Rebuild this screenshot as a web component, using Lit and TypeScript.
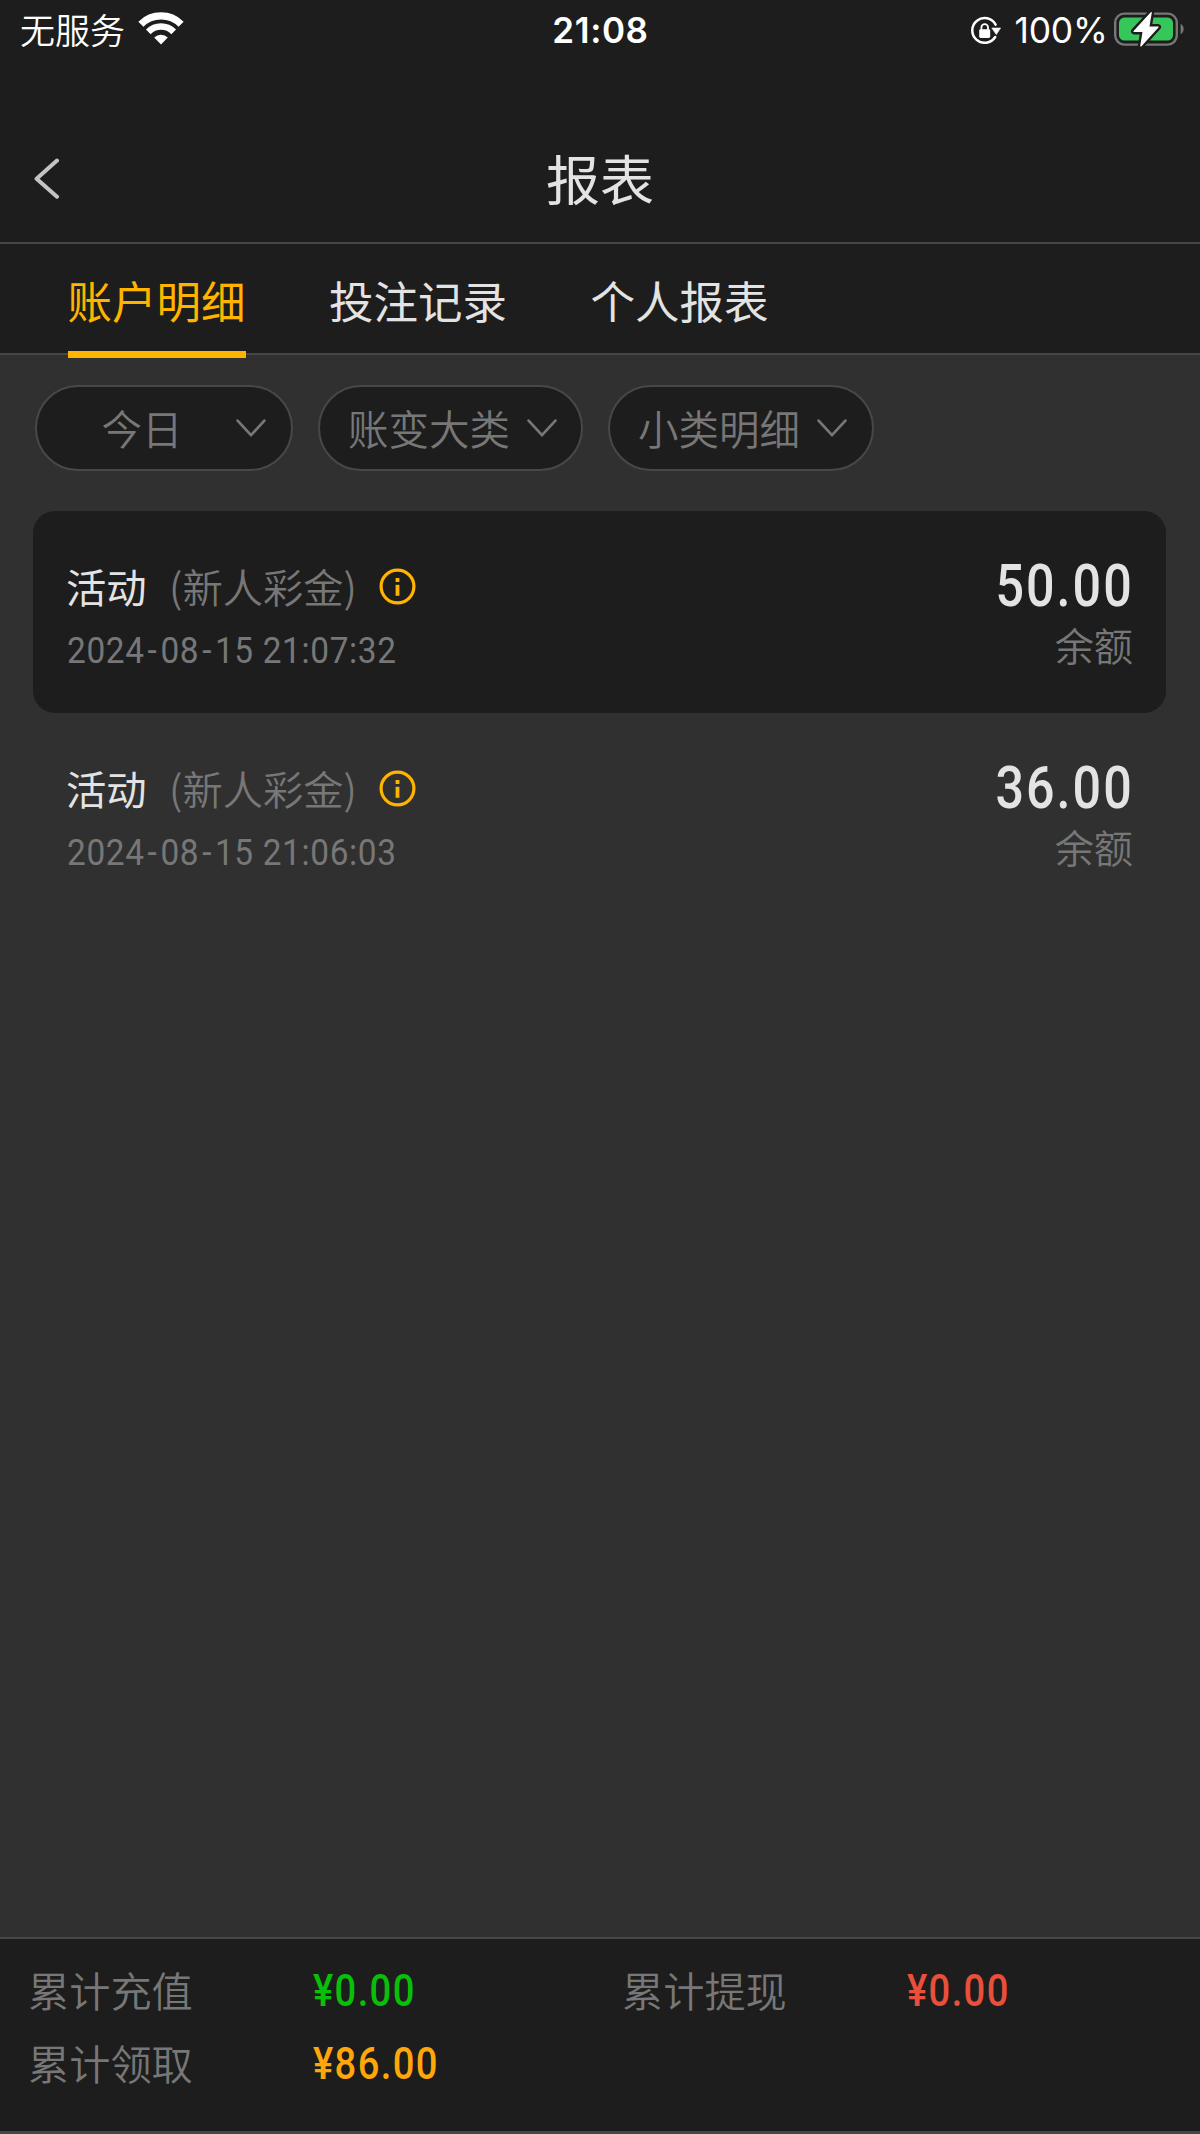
import { LitElement, html, css, svg } from "lit";
import { customElement, property } from "lit/decorators.js";

interface Entry {
  kind: string;
  detail: string;
  time: string;
  amount: string;
  label: string;
}

const entries: Entry[] = [
  { kind: "活动", detail: "(新人彩金)", time: "2024-08-15 21:07:32", amount: "50.00", label: "余额" },
  { kind: "活动", detail: "(新人彩金)", time: "2024-08-15 21:06:03", amount: "36.00", label: "余额" },
];

const tabs = ["账户明细", "投注记录", "个人报表"];
const filters = ["今日", "账变大类", "小类明细"];

const totals = [
  { label: "累计充值", value: "¥0.00", tone: "green" },
  { label: "累计提现", value: "¥0.00", tone: "red" },
  { label: "累计领取", value: "¥86.00", tone: "amber" },
];

const boltPath = "M37.2 0.6 L20 19.4 H29.2 L26.8 34 L44 15 H34.8 Z";

@customElement("status-bar")
class StatusBar extends LitElement {
  static styles = css`
    :host {
      display: grid;
      grid-template-columns: 1fr auto 1fr;
      height: 60px;
      padding: 0 15px 0 20px;
      color: #fff;
      font: 400 35px/60px Inter, "Noto Sans CJK SC", sans-serif;
    }
    .left, .right { display: flex; align-items: flex-start; }
    .carrier { font: 350 35px/58px "Noto Sans CJK SC", sans-serif; }
    .wifi { margin: 12px 0 0 12.5px; }
    .time { font-weight: 600; font-size: 35px; letter-spacing: 0.6px; margin-right: 4px; }
    .right { justify-content: flex-end; }
    .lock { margin: 15px 14px 0 0; }
    .percent { font-size: 35.5px; letter-spacing: -0.3px; line-height: 61px; }
    .battery { margin: 12px 0 0 6.5px; }
    svg { display: block; flex: none; }
  `;
  render() {
    return html`
      <div class="left">
        <span class="carrier">无服务</span>
        <svg class="wifi" width="46" height="34" viewBox="0 0 46 34">
          <g fill="none" stroke="#fff">
            <path d="M2.9 12.2 A28.6 28.6 0 0 1 43.1 12.2" stroke-width="7.2" />
            <path d="M10.3 19.8 A18 18 0 0 1 35.7 19.8" stroke-width="6.6" />
          </g>
          <path d="M16.2 25.4 A9.8 9.8 0 0 1 29.8 25.4 L23 32.4 Z" fill="#fff" />
        </svg>
      </div>
      <span class="time">21:08</span>
      <div class="right">
        <svg class="lock" width="31" height="31" viewBox="0 0 31 31">
          <path d="M25.2 22 A12.4 12.4 0 1 1 25.6 9.6" fill="none" stroke="#fff" stroke-width="2.5" stroke-linecap="round" />
          <path d="M21.8 13 H30.6 L26.3 19.6 Z" fill="#fff" stroke="#fff" stroke-width="0.6" stroke-linejoin="round" />
          <rect x="9.2" y="14.2" width="11" height="8.8" rx="1.4" fill="#fff" />
          <path d="M11.4 14.8 V12.4 a3.3 3.3 0 0 1 6.6 0 V14.8" fill="none" stroke="#fff" stroke-width="1.8" />
        </svg>
        <span class="percent">100%</span>
        <svg class="battery" width="71" height="35" viewBox="0 0 71 35">
          <rect x="1.2" y="1.6" width="61.6" height="31" rx="9" fill="none" stroke="#77777a" stroke-width="2.4" />
          <path d="M66.6 11.8 A6 6 0 0 1 66.6 22.2 Z" fill="#77777a" />
          <rect x="5" y="5.6" width="54" height="23" rx="5.4" fill="#35c759" />
          ${svg`<path d=${boltPath} fill="#1d1d1d" stroke="#1d1d1d" stroke-width="6" stroke-linejoin="round" />
          <path d=${boltPath} fill="#fff" stroke="#fff" stroke-width="1.2" stroke-linejoin="round" />`}
        </svg>
      </div>
    `;
  }
}

@customElement("filter-pill")
class FilterPill extends LitElement {
  @property() label = "";
  static styles = css`
    :host {
      box-sizing: border-box;
      display: flex;
      align-items: center;
      justify-content: space-between;
      height: 86px;
      padding: 0 25px 0 28px;
      border: 2px solid #484848;
      border-radius: 43px;
      background: #1d1d1d;
      color: #777;
    }
    .label { flex: 1; text-align: center; font-size: 40.5px; line-height: 81px; padding-bottom: 1px; white-space: nowrap; }
    .chevron { display: block; flex: none; margin-left: 17px; }
  `;
  render() {
    return html`
      <span class="label">${this.label}</span>
      <svg class="chevron" width="30" height="19" viewBox="0 0 30 19">
        <path d="M1.6 1.6 L15 16.2 L28.4 1.6" fill="none" stroke="#777" stroke-width="2.7" stroke-linecap="round" stroke-linejoin="round" />
      </svg>
    `;
  }
}

@customElement("entry-row")
class EntryRow extends LitElement {
  @property({ attribute: false }) entry!: Entry;
  static styles = css`
    :host {
      box-sizing: border-box;
      display: flex;
      justify-content: space-between;
      height: 202px;
      padding: 45px 34px 0 33px;
      border-radius: 22px;
      color: #777;
    }
    .head { display: flex; align-items: center; gap: 22.5px; height: 60px; font-size: 40.3px; line-height: 60px; }
    .kind { color: #e3e3e3; font-weight: 400; }
    .info { display: block; margin-left: -0.6px; }
    .time {
      margin: 15px 0 0 1px;
      font: 400 36.3px/40px Roboto, sans-serif;
      letter-spacing: 0.7px;
      white-space: pre;
      transform: scaleX(0.92);
      transform-origin: left;
    }
    .dash { padding: 0 3.2px; }
    .side { display: flex; flex-direction: column; align-items: flex-end; }
    .amount {
      font: 500 59.5px/61px Roboto, sans-serif;
      color: #e3e3e3;
      letter-spacing: 2.4px;
      margin-right: -2px;
      transform: scaleX(0.845);
      transform-origin: right;
    }
    .label {
      margin-top: 6px;
      margin-right: -1px;
      font-family: "Liberation Sans", "Noto Sans CJK SC", sans-serif;
      font-size: 39.2px;
      line-height: 50px;
    }
  `;
  render() {
    const e = this.entry;
    const parts = e.time.split("-");
    return html`
      <div class="main">
        <div class="head">
          <span class="kind">${e.kind}</span>
          <span class="detail">${e.detail}</span>
          <svg class="info" width="37" height="37" viewBox="0 0 37 37">
            <circle cx="18.5" cy="18.5" r="16.4" fill="none" stroke="#ffb400" stroke-width="3.2" />
            <rect x="16.6" y="10" width="3.8" height="4" fill="#ffb400" />
            <rect x="16.6" y="16.8" width="3.8" height="11" fill="#ffb400" />
          </svg>
        </div>
        <div class="time">${parts.map((p, i) => (i ? html`<span class="dash">-</span>${p}` : p))}</div>
      </div>
      <div class="side">
        <span class="amount">${e.amount}</span>
        <span class="label">${e.label}</span>
      </div>
    `;
  }
}

@customElement("app-root")
class AppRoot extends LitElement {
  static styles = css`
    :host {
      box-sizing: border-box;
      display: flex;
      flex-direction: column;
      width: 1200px;
      height: 2134px;
      overflow: hidden;
      background: #303030;
      font-family: "Noto Sans CJK SC", sans-serif;
      font-weight: 350;
    }
    .top { background: #1d1d1d; }
    .nav {
      box-sizing: border-box;
      display: grid;
      grid-template-columns: 1fr auto 1fr;
      align-items: start;
      height: 184px;
      padding: 0 33.5px;
      border-bottom: 2px solid #464646;
    }
    .back { display: block; margin-top: 98px; }
    .title { color: #e3e3e3; font-size: 54px; font-weight: 400; line-height: 80px; padding-top: 78px; }
    .tabs {
      box-sizing: border-box;
      display: flex;
      gap: 83.5px;
      height: 111px;
      padding: 0 67.5px;
      border-bottom: 2px solid #464646;
    }
    .tab {
      box-sizing: border-box;
      height: 114px;
      color: #e3e3e3;
      font-size: 44.5px;
      font-weight: 400;
      line-height: 111px;
    }
    .tab.active { color: #ffb400; border-bottom: 7px solid #ffb400; z-index: 1; }
    .filters { display: grid; grid-template-columns: 258px 265px 266px; gap: 25px; padding: 30px 35px 0; }
    .list { flex: 1; padding: 40px 34px 0 33px; }
    .odd { background: #1d1d1d; }
    .totals {
      box-sizing: border-box;
      display: grid;
      grid-template-columns: 285px 309px 285px 1fr;
      grid-auto-rows: 72.5px;
      height: 197px;
      padding: 15px 28px 0;
      border-top: 2px solid #484848;
      border-bottom: 3px solid #464646;
      background: #1d1d1d;
    }
    .total-label { color: #777; font-size: 41.2px; line-height: 71px; }
    .total-value {
      justify-self: start;
      font: 500 44.6px/74px Roboto, sans-serif;
      letter-spacing: 1.6px;
      transform: scaleX(0.855);
      transform-origin: left;
    }
    .green { color: #0abf0a; }
    .red { color: #e94f3a; }
    .amber { color: #ffa70a; }
  `;
  render() {
    return html`
      <div class="top">
        <status-bar></status-bar>
        <div class="nav">
          <svg class="back" width="26" height="42" viewBox="0 0 26 42">
            <path d="M23 2.6 L2.6 20.8 L23 38.8" fill="none" stroke="#c4c4c4" stroke-width="4" stroke-linecap="round" stroke-linejoin="round" />
          </svg>
          <span class="title">报表</span>
        </div>
        <div class="tabs">
          ${tabs.map((t, i) => html`<span class="tab ${i === 0 ? "active" : ""}">${t}</span>`)}
        </div>
      </div>
      <div class="filters">
        ${filters.map((f) => html`<filter-pill .label=${f}></filter-pill>`)}
      </div>
      <div class="list">
        ${entries.map((e, i) => html`<entry-row class=${i % 2 === 0 ? "odd" : "even"} .entry=${e}></entry-row>`)}
      </div>
      <div class="totals">
        ${totals.map((t) => html`
          <span class="total-label">${t.label}</span>
          <span class="total-value ${t.tone}">${t.value}</span>
        `)}
      </div>
    `;
  }
}
